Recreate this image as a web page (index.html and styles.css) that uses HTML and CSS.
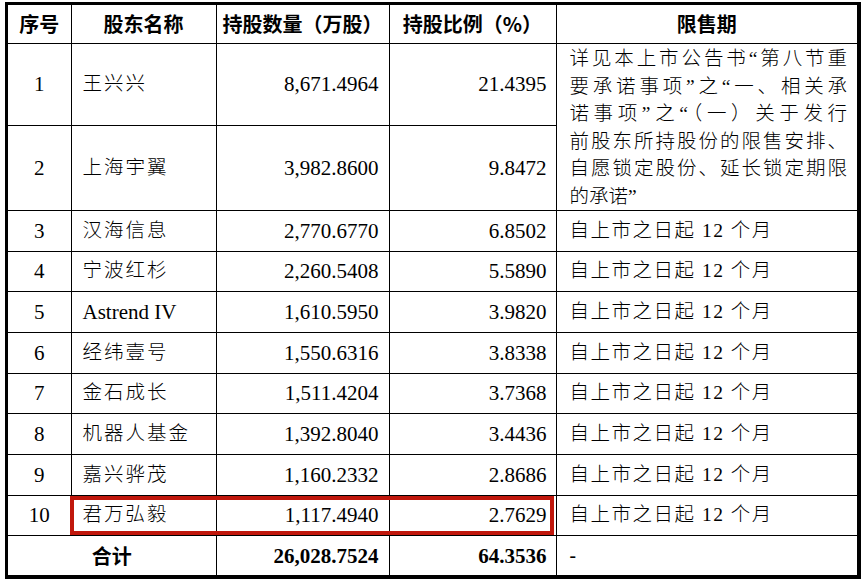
FILE: index.html
```html
<!DOCTYPE html>
<html lang="zh-CN">
<head>
<meta charset="utf-8">
<title>股东限售期</title>
<link rel="stylesheet" href="styles.css">
</head>
<body>
<div class="frame">
  <table class="grid">
    <colgroup>
      <col class="c-no"><col class="c-name"><col class="c-qty"><col class="c-pct"><col class="c-lock">
    </colgroup>
    <thead>
      <tr class="head">
        <th>序号</th><th>股东名称</th><th>持股数量（万股）</th><th>持股比例（%）</th><th>限售期</th>
      </tr>
    </thead>
    <tbody>
      <tr class="r1">
        <td class="no">1</td><td class="name">王兴兴</td><td class="num">8,671.4964</td><td class="num pct">21.4395</td>
        <td class="lock long" rowspan="2">
          <div class="jl">详见本上市公告书“第八节重</div>
          <div class="jl">要承诺事项”之“一、相关承</div>
          <div class="jl">诺事项”之“（一）关于发行</div>
          <div class="jl">前股东所持股份的限售安排、</div>
          <div class="jl">自愿锁定股份、延长锁定期限</div>
          <div class="ll">的承诺”</div>
        </td>
      </tr>
      <tr class="r2">
        <td class="no">2</td><td class="name">上海宇翼</td><td class="num">3,982.8600</td><td class="num pct">9.8472</td>
      </tr>
      <tr class="row">
        <td class="no">3</td><td class="name">汉海信息</td><td class="num">2,770.6770</td><td class="num pct">6.8502</td><td class="lock">自上市之日起 12 个月</td>
      </tr>
      <tr class="row">
        <td class="no">4</td><td class="name">宁波红杉</td><td class="num">2,260.5408</td><td class="num pct">5.5890</td><td class="lock">自上市之日起 12 个月</td>
      </tr>
      <tr class="row">
        <td class="no">5</td><td class="name latin">Astrend IV</td><td class="num">1,610.5950</td><td class="num pct">3.9820</td><td class="lock">自上市之日起 12 个月</td>
      </tr>
      <tr class="row">
        <td class="no">6</td><td class="name">经纬壹号</td><td class="num">1,550.6316</td><td class="num pct">3.8338</td><td class="lock">自上市之日起 12 个月</td>
      </tr>
      <tr class="row">
        <td class="no">7</td><td class="name">金石成长</td><td class="num">1,511.4204</td><td class="num pct">3.7368</td><td class="lock">自上市之日起 12 个月</td>
      </tr>
      <tr class="row">
        <td class="no">8</td><td class="name">机器人基金</td><td class="num">1,392.8040</td><td class="num pct">3.4436</td><td class="lock">自上市之日起 12 个月</td>
      </tr>
      <tr class="row">
        <td class="no">9</td><td class="name">嘉兴骅茂</td><td class="num">1,160.2332</td><td class="num pct">2.8686</td><td class="lock">自上市之日起 12 个月</td>
      </tr>
      <tr class="row">
        <td class="no">10</td><td class="name">君万弘毅</td><td class="num">1,117.4940</td><td class="num pct">2.7629</td><td class="lock">自上市之日起 12 个月</td>
      </tr>
      <tr class="total">
        <td class="sum" colspan="2">合计</td><td class="num strong">26,028.7524</td><td class="num pct strong">64.3536</td><td class="lock strong">-</td>
      </tr>
    </tbody>
  </table>
  <div class="highlight"></div>
</div>
</body>
</html>
```

FILE: styles.css
```css
html, body {
  background: #ffffff;
}
body {
  margin: 2px 0 0 5px;
  color: #000;
}
.frame {
  position: relative;
  width: 849px;
  border-style: solid;
  border-color: #000;
  border-width: 3px 4px 4px 3px;
}
.grid {
  width: 849px;
  table-layout: fixed;
  border-collapse: collapse;
  border-style: hidden;
}
.c-no { width: 63px; }
.c-name { width: 145px; }
.c-qty { width: 173px; }
.c-pct { width: 167px; }
.c-lock { width: 301px; }

.grid th,
.grid td {
  border: 1px solid #000;
  padding: 0;
  vertical-align: middle;
}
.grid th {
  font-family: "Noto Sans CJK SC", sans-serif;
  font-weight: 700;
  font-size: 20px;
  text-align: center;
  line-height: 24px;
}
.head { height: 38.5px; }
.r1 { height: 81.5px; }
.r2 { height: 85.5px; }
.row { height: 40.67px; }
.total { height: 39.5px; }

.grid td {
  font-family: "Liberation Serif", "Noto Sans CJK SC", serif;
  font-size: 21px;
  line-height: 26px;
  font-weight: 300;
}
.grid td.no { text-align: center; }
.grid td.name {
  padding-left: 11px;
  font-size: 19.5px;
  letter-spacing: 2px;
}
.grid td.name.latin {
  font-size: 21px;
  letter-spacing: 0;
}
.grid td.num {
  text-align: right;
  padding-right: 10px;
}
.grid td.num.pct { padding-right: 9px; }
.grid td.lock {
  padding-left: 13px;
  padding-right: 10px;
  font-size: 19.5px;
  letter-spacing: 1.5px;
  white-space: nowrap;
}
.grid td.lock.long {
  vertical-align: top;
  padding-top: 1px;
  letter-spacing: 0;
  line-height: 27.5px;
}
.jl {
  text-align: justify;
  text-align-last: justify;
}
.ll { text-align: left; }

.grid td.sum {
  text-align: center;
  font-family: "Noto Sans CJK SC", sans-serif;
  font-weight: 700;
  font-size: 20px;
}
.grid td.strong { font-weight: 700; }

.highlight {
  position: absolute;
  left: 62px;
  top: 491px;
  width: 484px;
  height: 39px;
  box-sizing: border-box;
  border: 4px solid #c0170c;
}
```
